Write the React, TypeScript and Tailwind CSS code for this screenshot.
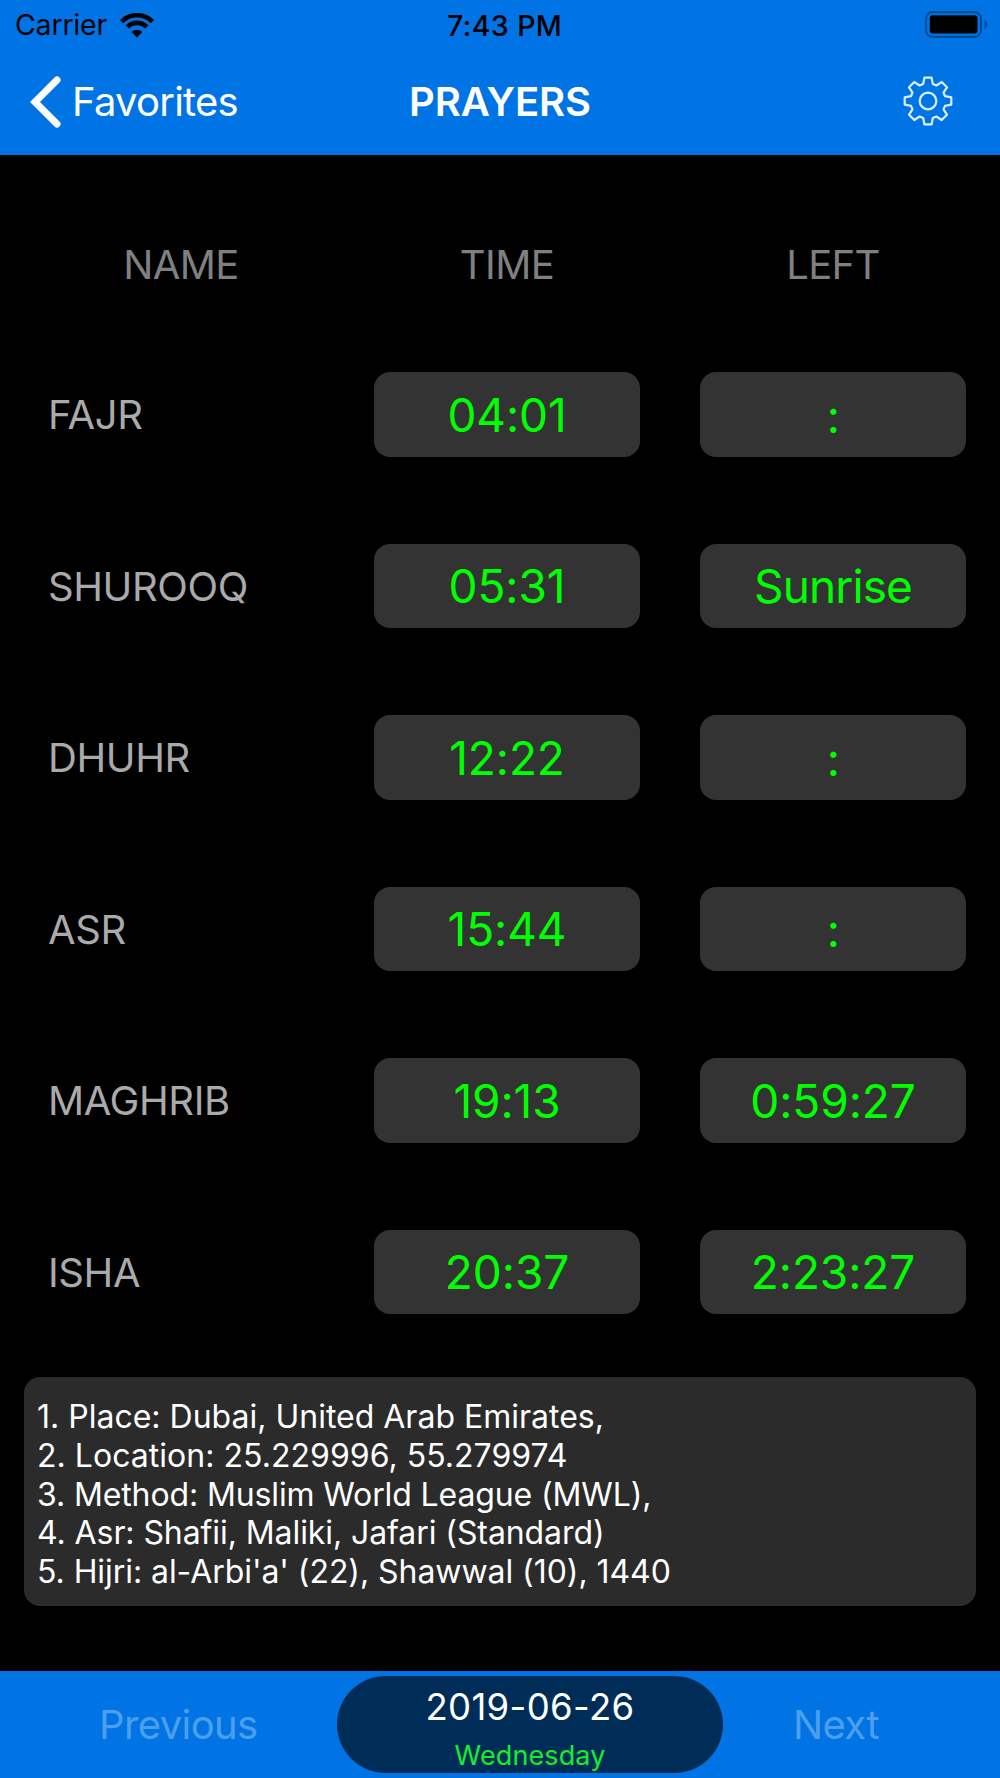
const prayers = [
  { name: 'FAJR', time: '04:01', left: ':' },
  { name: 'SHUROOQ', time: '05:31', left: 'Sunrise' },
  { name: 'DHUHR', time: '12:22', left: ':' },
  { name: 'ASR', time: '15:44', left: ':' },
  { name: 'MAGHRIB', time: '19:13', left: '0:59:27' },
  { name: 'ISHA', time: '20:37', left: '2:23:27' },
]

const details = [
  { text: '1. Place: Dubai, United Arab Emirates,', tracking: 'tracking-normal' },
  { text: '2. Location: 25.229996, 55.279974', tracking: 'tracking-[0.03px]' },
  { text: '3. Method: Muslim World League (MWL),', tracking: 'tracking-[-0.12px]' },
  { text: '4. Asr: Shafii, Maliki, Jafari (Standard)', tracking: 'tracking-[-0.08px]' },
  { text: "5. Hijri: al-Arbi'a' (22), Shawwal (10), 1440", tracking: 'tracking-[-0.06px]' },
]

function WifiIcon() {
  return (
    <svg width="34" height="25" viewBox="0 0 34 25" fill="none" stroke="#000">
      <path d="M1.6 8.6 A21.8 21.8 0 0 1 32.4 8.6" strokeWidth="4.7" />
      <path d="M7.2 13.9 A13.9 13.9 0 0 1 26.8 13.9" strokeWidth="4.7" />
      <path d="M17 24.6 L11.6 19 A7.6 7.6 0 0 1 22.4 19 Z" fill="#000" stroke="none" />
    </svg>
  )
}

function BatteryIcon() {
  return (
    <svg width="63" height="27" viewBox="0 0 63 27">
      <rect x="1" y="1.2" width="55" height="24.6" rx="6.5" fill="none" stroke="#004f9e" strokeWidth="2.2" />
      <rect x="4.7" y="4.2" width="47.8" height="18.3" rx="3" fill="#000" />
      <path d="M59.5 8.5 Q62.5 10.5 62.5 13.5 Q62.5 16.5 59.5 18.5 Z" fill="#004f9e" />
    </svg>
  )
}

function GearIcon() {
  return (
    <svg width="50" height="50" viewBox="-25 -25 50 50" fill="none" stroke="#d9efff" strokeWidth="2.2" strokeLinejoin="round">
      <circle r="8.3" />
      <path d="M-3.6 -23.3 H3.6 L4.8 -17 L8.4 -15.5 L13.7 -19 L19 -13.7 L15.5 -8.4 L17 -4.8 L23.3 -3.6 V3.6 L17 4.8 L15.5 8.4 L19 13.7 L13.7 19 L8.4 15.5 L4.8 17 L3.6 23.3 H-3.6 L-4.8 17 L-8.4 15.5 L-13.7 19 L-19 13.7 L-15.5 8.4 L-17 4.8 L-23.3 3.6 V-3.6 L-17 -4.8 L-15.5 -8.4 L-19 -13.7 L-13.7 -19 L-8.4 -15.5 L-4.8 -17 Z" />
    </svg>
  )
}

function Header() {
  return (
    <header className="h-[155px] bg-[#0074e4]">
      <div className="grid h-[50px] grid-cols-[432px_1fr_auto] items-center pl-[15px] pr-[12px] text-[28.5px] text-black">
        <div className="flex items-center gap-[13px]">
          <span className="pt-px tracking-[-0.2px]">Carrier</span>
          <WifiIcon />
        </div>
        <span className="pt-[2px] font-medium tracking-[0.4px]">7:43 PM</span>
        <div className="pb-[2px]">
          <BatteryIcon />
        </div>
      </div>
      <div className="grid h-[103px] grid-cols-[1fr_auto_1fr] items-center px-[30px] text-[40px] text-white">
        <div className="flex items-center gap-[11px]">
          <svg width="31" height="52" viewBox="0 0 31 52" fill="none" stroke="#fff" strokeWidth="7" strokeLinecap="round">
            <path d="M27 4 L5 26 L27 48" />
          </svg>
          <span className="tracking-[-0.75px]">Favorites</span>
        </div>
        <h1 className="font-semibold tracking-[-0.1px]">PRAYERS</h1>
        <div className="flex justify-end pb-[2px] pr-[17px]">
          <GearIcon />
        </div>
      </div>
    </header>
  )
}

function TimeBox({ value }: { value: string }) {
  return (
    <div className="flex h-[84.5px] items-center justify-center rounded-[16px] bg-[#333333] pt-[2px] text-[46px] text-[#00ff00]">
      {value === ':' && <span className="pl-px pt-[2px]">:</span>}
      {value === 'Sunrise' && <span className="tracking-[-0.9px]">Sunrise</span>}
      {value.length > 1 && value !== 'Sunrise' && <span className="tracking-[-0.1px]">{value}</span>}
    </div>
  )
}

export default function App() {
  return (
    <main className="flex h-[1778px] w-[1000px] flex-col overflow-hidden bg-black font-['Inter',sans-serif]">
      <Header />
      <div className="mt-[80px] grid h-[50px] grid-cols-[266px_266px_266px] items-center gap-[60px] pl-[48px] text-center text-[40px] tracking-[-0.6px] text-[#808080]">
        <span>NAME</span>
        <span>TIME</span>
        <span>LEFT</span>
      </div>
      <section className="mt-[87px] flex flex-col gap-[87px]">
        {prayers.map((p) => (
          <div key={p.name} className="grid grid-cols-[266px_266px_266px] items-center gap-[60px] pl-[48px] text-[40px] text-[#aaaaaa]">
            <span className="pt-[2px] tracking-[-0.4px]">{p.name}</span>
            <TimeBox value={p.time} />
            <TimeBox value={p.left} />
          </div>
        ))}
      </section>
      <section className="mx-[24px] mt-[63px] h-[229px] rounded-[16px] bg-[#2b2b2b] pl-[13px] pt-[21px] text-[32px] leading-[38.75px] text-white">
        {details.map((line) => (
          <p key={line.text} className={`whitespace-nowrap ${line.tracking}`}>{line.text}</p>
        ))}
      </section>
      <footer className="mt-auto grid h-[107px] grid-cols-[337px_386px_277px] bg-[#0074e4] pt-[5px] text-[40px] tracking-[-0.6px] text-[#4d9eec]">
        <span className="pl-[99px] pt-[19px]">Previous</span>
        <div className="flex h-[97px] flex-col items-center rounded-full bg-[#002d58] pt-px">
          <span className="text-[36.5px] leading-[60px] tracking-[0.35px] text-white">2019-06-26</span>
          <span className="pt-px text-[27px] leading-[36px] tracking-[0.1px] text-[#15ee2c]">Wednesday</span>
        </div>
        <span className="pl-[70px] pt-[19px]">Next</span>
      </footer>
    </main>
  )
}
